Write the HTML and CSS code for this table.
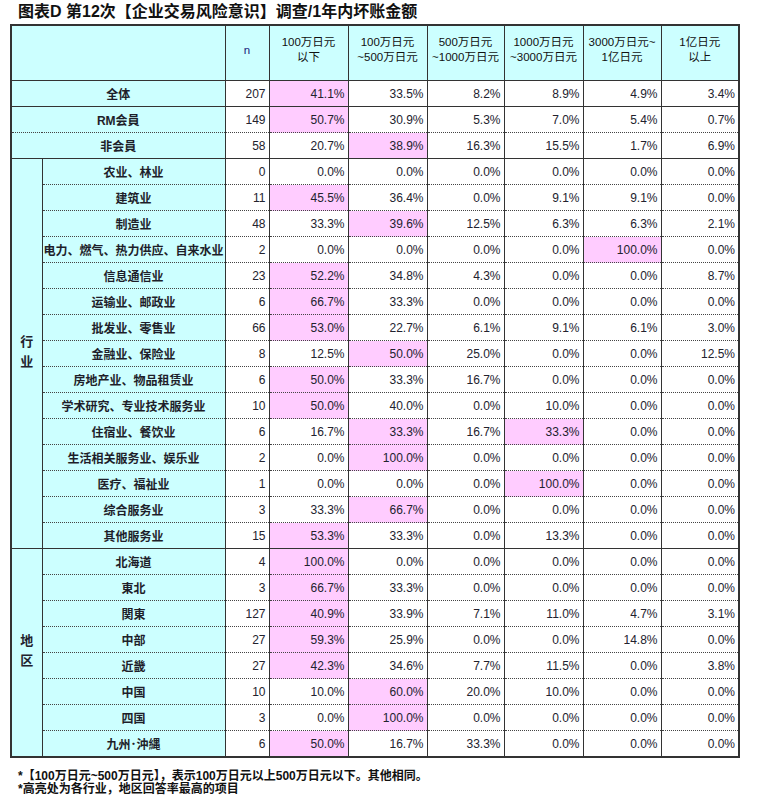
FILE: index.html
```html
<!DOCTYPE html>
<html lang="zh">
<head>
<meta charset="utf-8">
<title>图表D</title>
<link rel="stylesheet" href="styles.css">
</head>
<body>
<h1 class="title">图表D 第12次【企业交易风险意识】调查/1年内坏账金额</h1>
<table class="grid">
<colgroup>
<col class="c-grp"><col class="c-lbl"><col class="c-n">
<col class="c-d"><col class="c-d"><col class="c-d3"><col class="c-d"><col class="c-d5"><col class="c-d5">
</colgroup>
<thead>
<tr class="head">
<th colspan="2" class="hl"></th>
<th class="hn">n</th>
<th>100万日元<br>以下</th>
<th>100万日元<br>~500万日元</th>
<th>500万日元<br>~1000万日元</th>
<th>1000万日元<br>~3000万日元</th>
<th>3000万日元~<br>1亿日元</th>
<th>1亿日元<br>以上</th>
</tr>
</thead>
<tbody>
<tr class="first"><td colspan="2" class="lbl">全体</td><td class="num">207</td><td class="num hi">41.1%</td><td class="num">33.5%</td><td class="num">8.2%</td><td class="num">8.9%</td><td class="num">4.9%</td><td class="num">3.4%</td></tr>
<tr class="first"><td colspan="2" class="lbl">RM会員</td><td class="num">149</td><td class="num hi">50.7%</td><td class="num">30.9%</td><td class="num">5.3%</td><td class="num">7.0%</td><td class="num">5.4%</td><td class="num">0.7%</td></tr>
<tr><td colspan="2" class="lbl">非会員</td><td class="num">58</td><td class="num">20.7%</td><td class="num hi">38.9%</td><td class="num">16.3%</td><td class="num">15.5%</td><td class="num">1.7%</td><td class="num">6.9%</td></tr>

<tr class="first"><td rowspan="15" class="grp"><span class="vt">行<br>业</span></td><td class="lbl">农业、林业</td><td class="num">0</td><td class="num">0.0%</td><td class="num">0.0%</td><td class="num">0.0%</td><td class="num">0.0%</td><td class="num">0.0%</td><td class="num">0.0%</td></tr>
<tr><td class="lbl">建筑业</td><td class="num">11</td><td class="num hi">45.5%</td><td class="num">36.4%</td><td class="num">0.0%</td><td class="num">9.1%</td><td class="num">9.1%</td><td class="num">0.0%</td></tr>
<tr><td class="lbl">制造业</td><td class="num">48</td><td class="num">33.3%</td><td class="num hi">39.6%</td><td class="num">12.5%</td><td class="num">6.3%</td><td class="num">6.3%</td><td class="num">2.1%</td></tr>
<tr><td class="lbl">电力、燃气、热力供应、自来水业</td><td class="num">2</td><td class="num">0.0%</td><td class="num">0.0%</td><td class="num">0.0%</td><td class="num">0.0%</td><td class="num hi">100.0%</td><td class="num">0.0%</td></tr>
<tr><td class="lbl">信息通信业</td><td class="num">23</td><td class="num hi">52.2%</td><td class="num">34.8%</td><td class="num">4.3%</td><td class="num">0.0%</td><td class="num">0.0%</td><td class="num">8.7%</td></tr>
<tr><td class="lbl">运输业、邮政业</td><td class="num">6</td><td class="num hi">66.7%</td><td class="num">33.3%</td><td class="num">0.0%</td><td class="num">0.0%</td><td class="num">0.0%</td><td class="num">0.0%</td></tr>
<tr><td class="lbl">批发业、零售业</td><td class="num">66</td><td class="num hi">53.0%</td><td class="num">22.7%</td><td class="num">6.1%</td><td class="num">9.1%</td><td class="num">6.1%</td><td class="num">3.0%</td></tr>
<tr><td class="lbl">金融业、保险业</td><td class="num">8</td><td class="num">12.5%</td><td class="num hi">50.0%</td><td class="num">25.0%</td><td class="num">0.0%</td><td class="num">0.0%</td><td class="num">12.5%</td></tr>
<tr><td class="lbl">房地产业、物品租赁业</td><td class="num">6</td><td class="num hi">50.0%</td><td class="num">33.3%</td><td class="num">16.7%</td><td class="num">0.0%</td><td class="num">0.0%</td><td class="num">0.0%</td></tr>
<tr><td class="lbl">学术研究、专业技术服务业</td><td class="num">10</td><td class="num hi">50.0%</td><td class="num">40.0%</td><td class="num">0.0%</td><td class="num">10.0%</td><td class="num">0.0%</td><td class="num">0.0%</td></tr>
<tr><td class="lbl">住宿业、餐饮业</td><td class="num">6</td><td class="num">16.7%</td><td class="num hi">33.3%</td><td class="num">16.7%</td><td class="num hi">33.3%</td><td class="num">0.0%</td><td class="num">0.0%</td></tr>
<tr><td class="lbl">生活相关服务业、娱乐业</td><td class="num">2</td><td class="num">0.0%</td><td class="num hi">100.0%</td><td class="num">0.0%</td><td class="num">0.0%</td><td class="num">0.0%</td><td class="num">0.0%</td></tr>
<tr><td class="lbl">医疗、福祉业</td><td class="num">1</td><td class="num">0.0%</td><td class="num">0.0%</td><td class="num">0.0%</td><td class="num hi">100.0%</td><td class="num">0.0%</td><td class="num">0.0%</td></tr>
<tr><td class="lbl">综合服务业</td><td class="num">3</td><td class="num">33.3%</td><td class="num hi">66.7%</td><td class="num">0.0%</td><td class="num">0.0%</td><td class="num">0.0%</td><td class="num">0.0%</td></tr>
<tr><td class="lbl">其他服务业</td><td class="num">15</td><td class="num hi">53.3%</td><td class="num">33.3%</td><td class="num">0.0%</td><td class="num">13.3%</td><td class="num">0.0%</td><td class="num">0.0%</td></tr>

<tr class="first"><td rowspan="8" class="grp"><span class="vt">地<br>区</span></td><td class="lbl">北海道</td><td class="num">4</td><td class="num hi">100.0%</td><td class="num">0.0%</td><td class="num">0.0%</td><td class="num">0.0%</td><td class="num">0.0%</td><td class="num">0.0%</td></tr>
<tr><td class="lbl">東北</td><td class="num">3</td><td class="num hi">66.7%</td><td class="num">33.3%</td><td class="num">0.0%</td><td class="num">0.0%</td><td class="num">0.0%</td><td class="num">0.0%</td></tr>
<tr><td class="lbl">関東</td><td class="num">127</td><td class="num hi">40.9%</td><td class="num">33.9%</td><td class="num">7.1%</td><td class="num">11.0%</td><td class="num">4.7%</td><td class="num">3.1%</td></tr>
<tr><td class="lbl">中部</td><td class="num">27</td><td class="num hi">59.3%</td><td class="num">25.9%</td><td class="num">0.0%</td><td class="num">0.0%</td><td class="num">14.8%</td><td class="num">0.0%</td></tr>
<tr><td class="lbl">近畿</td><td class="num">27</td><td class="num hi">42.3%</td><td class="num">34.6%</td><td class="num">7.7%</td><td class="num">11.5%</td><td class="num">0.0%</td><td class="num">3.8%</td></tr>
<tr><td class="lbl">中国</td><td class="num">10</td><td class="num">10.0%</td><td class="num hi">60.0%</td><td class="num">20.0%</td><td class="num">10.0%</td><td class="num">0.0%</td><td class="num">0.0%</td></tr>
<tr><td class="lbl">四国</td><td class="num">3</td><td class="num">0.0%</td><td class="num hi">100.0%</td><td class="num">0.0%</td><td class="num">0.0%</td><td class="num">0.0%</td><td class="num">0.0%</td></tr>
<tr><td class="lbl">九州･沖縄</td><td class="num">6</td><td class="num hi">50.0%</td><td class="num">16.7%</td><td class="num">33.3%</td><td class="num">0.0%</td><td class="num">0.0%</td><td class="num">0.0%</td></tr>
</tbody>
</table>
<div class="notes">
<p>*【100万日元~500万日元】，表示100万日元以上500万日元以下。其他相同。</p>
<p>*高亮处为各行业，地区回答率最高的项目</p>
</div>
</body>
</html>
```
FILE: styles.css
```css
html, body {
  margin: 0;
  padding: 0;
  background: #ffffff;
}
body {
  font-family: "Liberation Sans", "Noto Sans CJK SC", sans-serif;
  color: #22222e;
}
.title {
  margin: 0;
  padding-left: 18px;
  height: 24px;
  line-height: 24px;
  font-size: 16px;
  font-weight: bold;
  color: #111;
  white-space: nowrap;
}
.grid {
  margin-left: 10px;
  border-collapse: collapse;
  table-layout: fixed;
  width: 728px;
  border: 2px solid #333;
  font-size: 12px;
}
.c-grp { width: 31px; }
.c-lbl { width: 183px; }
.c-n { width: 44px; }
.c-d { width: 79px; }
.c-d3 { width: 77px; }
.c-d5 { width: 78px; }

.head th {
  height: 48px;
  padding: 0 0 6px 0;
  background: #ccffff;
  border: 1px solid #333;
  font-weight: normal;
  font-size: 11.5px;
  line-height: 15px;
  text-align: center;
  vertical-align: middle;
  color: #111;
  white-space: nowrap;
}
.head .hn {
  color: #1a1a7a;
}
td {
  height: 25px;
  padding: 0;
  border-left: 1px solid #333;
  border-right: 1px solid #333;
  border-top: 1px dotted #444;
  border-bottom: 1px dotted #444;
  white-space: nowrap;
  vertical-align: middle;
}
tr.first td {
  border-top: 1px solid #333;
}
.lbl {
  background: #ccffff;
  text-align: center;
  font-weight: bold;
  color: #1e1e2a;
}
.grp {
  background: #ccffff;
  text-align: center;
  border-top: 1px solid #333;
  border-bottom: 1px solid #333;
  padding-bottom: 4px;
}
.vt {
  display: inline-block;
  font-size: 13px;
  font-weight: bold;
  line-height: 20px;
}
.num {
  text-align: right;
  padding-right: 3px;
  background: #ffffff;
}
.num.hi {
  background: #ffccff;
}
.notes {
  padding: 12px 0 0 18px;
}
.notes p {
  margin: 0;
  font-size: 12px;
  line-height: 13px;
  font-weight: bold;
  color: #111;
  white-space: nowrap;
}
```
